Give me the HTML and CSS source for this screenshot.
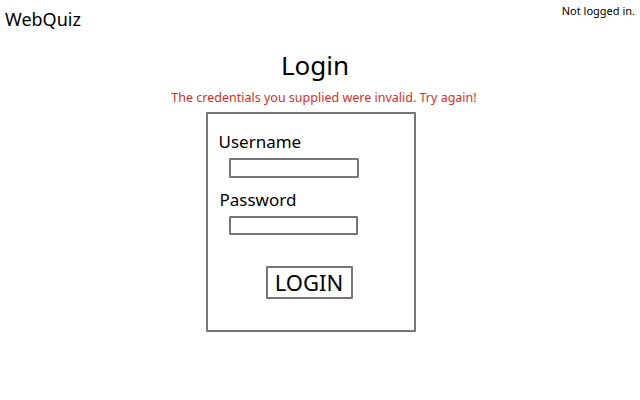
FILE: index.html
```html
<!DOCTYPE html>
<html>
<head>
<meta charset="utf-8">
<link rel="stylesheet" href="styles.css">
</head>
<body>
<header class="top">
  <div class="brand">WebQuiz</div>
  <div class="status">Not logged in.</div>
</header>
<main class="main">
  <h1 class="title">Login</h1>
  <p class="error">The credentials you supplied were invalid. Try again!</p>
  <form class="box">
    <label class="label">Username</label>
    <input class="field" type="text">
    <label class="label label-pw">Password</label>
    <input class="field field-pw" type="password">
    <button class="btn" type="button">LOGIN</button>
  </form>
</main>
</body>
</html>
```
FILE: styles.css
```css
html, body { margin: 0; padding: 0; background: #fff; }
body { font-family: "Noto Sans", "Open Sans", sans-serif; color: #000; width: 640px; height: 400px; overflow: hidden; }
.top { display: flex; justify-content: space-between; align-items: flex-start; height: 40px; }
.brand { font-size: 18px; padding: 7px 0 0 5px; line-height: 24px; }
.status { font-size: 11px; padding: 3px 5px 0 0; line-height: 16px; }
.main { display: flex; flex-direction: column; align-items: center; }
.title { font-size: 26px; font-weight: normal; margin: 7px 10px 0 0; line-height: 36px; }
.error { color: #d52f25; font-size: 12.5px; margin: 6px 0 0 8px; line-height: 18px; }
.box { box-sizing: border-box; width: 210px; height: 220px; margin: 5px 19px 0 0; border: 2px solid #777; border-radius: 1px; display: flex; flex-direction: column; align-items: flex-start; padding: 16px 0 0 11px; }
.label { font-size: 17px; line-height: 24px; }
.label-pw { margin: 10px 0 0 1px; }
.field { box-sizing: border-box; width: 130px; height: 20px; border: 2px solid #777; border-radius: 1px; margin: 4px 0 0 10px; padding: 0; background: #fff; }
.field-pw { width: 129px; height: 19px; margin-top: 4px; }
.btn { box-sizing: border-box; margin: 31px 0 0 47px; width: 87px; height: 33px; border: 2px solid #777; border-radius: 1px; background: #fff; font-family: inherit; font-size: 22px; padding: 0; line-height: 29px; color: #000; }
```
